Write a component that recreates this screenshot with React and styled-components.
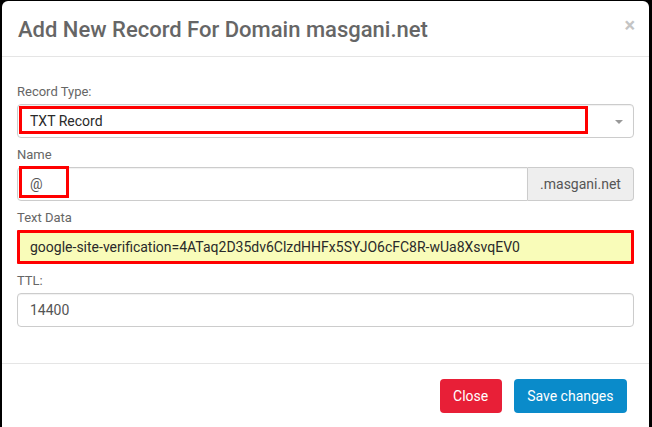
import styled, { createGlobalStyle } from "styled-components";

const GlobalStyle = createGlobalStyle`
  html, body {
    margin: 0;
    padding: 0;
    background: #000;
    font-family: Roboto, "Liberation Sans", sans-serif;
  }
`;

const Screen = styled.div`
  width: 652px;
  height: 427px;
  overflow: hidden;
  padding: 1px 0 0 2px;
  box-sizing: border-box;
`;

const Dialog = styled.div`
  width: 647px;
  height: 440px;
  background: #fff;
  border-radius: 6px;
  display: flex;
  flex-direction: column;
`;

const Header = styled.div`
  height: 55px;
  display: flex;
  align-items: center;
  justify-content: space-between;
  padding: 0 16px 0 16px;
  border-bottom: 1px solid #e5e5e5;
`;

const Title = styled.h4`
  margin: 0;
  font-size: 22px;
  font-weight: 500;
  color: #666;
  padding-top: 2px;
`;

const CloseX = styled.span`
  font-size: 20px;
  font-weight: 700;
  color: #c4c4c4;
  margin-top: -8px;
  margin-right: -2px;
  line-height: 1;
`;

const Body = styled.div`
  padding: 26px 15px 36px;
  display: flex;
  flex-direction: column;
  gap: 8px;
  border-bottom: 1px solid #e5e5e5;
`;

const Group = styled.div`
  display: flex;
  flex-direction: column;
  gap: 3px;
`;

const Label = styled.label`
  font-size: 13px;
  line-height: 18px;
  color: #666;
`;

const Field = styled.div`
  position: relative;
  flex: none;
  height: 34px;
  box-sizing: border-box;
  border: ${(p) => (p.$flagged ? "3px solid #f00" : "1px solid #ccc")};
  border-radius: ${(p) => (p.$flagged ? "1px" : "4px")};
  background: ${(p) => (p.$flagged ? "#f9fcb9" : "#fff")};
  box-shadow: ${(p) => (p.$flagged ? "none" : "inset 0 1px 1px rgba(0,0,0,0.06)")};
  display: flex;
  align-items: center;
  padding: 0 ${(p) => (p.$flagged ? "10px" : "12px")};
  font-size: 14px;
  color: ${(p) => (p.$dark ? "#2a2a2a" : "#555")};
`;

const Caret = styled.span`
  position: absolute;
  right: 10px;
  top: 15px;
  width: 0;
  height: 0;
  border-left: 4px solid transparent;
  border-right: 4px solid transparent;
  border-top: 4px solid #999;
`;

const Mark = styled.span`
  position: absolute;
  top: ${(p) => p.$top}px;
  left: ${(p) => p.$left}px;
  width: ${(p) => p.$w}px;
  height: ${(p) => p.$h}px;
  border: 3px solid #f00;
  box-sizing: border-box;
`;

const InputGroup = styled.div`
  display: flex;
  position: relative;
`;

const LeftField = styled(Field)`
  flex: 1;
  border-radius: 4px 0 0 4px;
`;

const Addon = styled.span`
  width: 106px;
  height: 34px;
  box-sizing: border-box;
  display: flex;
  align-items: center;
  justify-content: center;
  background: #eee;
  border: 1px solid #ccc;
  border-left: none;
  border-radius: 0 4px 4px 0;
  font-size: 14px;
  color: #555;
`;

const Footer = styled.div`
  padding: 15px 22px 15px 15px;
  display: flex;
  justify-content: flex-end;
  gap: 12px;
`;

const Button = styled.button`
  height: 34px;
  padding: 0 13.5px;
  border: none;
  border-radius: 4px;
  font-family: Roboto, "Liberation Sans", sans-serif;
  font-size: 14px;
  color: #fff;
  background: ${(p) => (p.$variant === "danger" ? "#e81f37" : "#0a8bca")};
`;

export default function App() {
  return (
    <>
      <GlobalStyle />
      <Screen>
        <Dialog>
          <Header>
            <Title>Add New Record For Domain masgani.net</Title>
            <CloseX>×</CloseX>
          </Header>
          <Body>
            <Group>
              <Label>Record Type:</Label>
              <Field $dark>
                TXT Record
                <Caret />
                <Mark $top={1} $left={1} $w={569} $h={28} />
              </Field>
            </Group>
            <Group>
              <Label>Name</Label>
              <InputGroup>
                <LeftField>@</LeftField>
                <Addon>.masgani.net</Addon>
                <Mark $top={-1} $left={2} $w={50} $h={32} />
              </InputGroup>
            </Group>
            <Group>
              <Label>Text Data</Label>
              <Field $flagged $dark>
                google-site-verification=4ATaq2D35dv6ClzdHHFx5SYJO6cFC8R-wUa8XsvqEV0
              </Field>
            </Group>
            <Group>
              <Label>TTL:</Label>
              <Field>14400</Field>
            </Group>
          </Body>
          <Footer>
            <Button $variant="danger">Close</Button>
            <Button>Save changes</Button>
          </Footer>
        </Dialog>
      </Screen>
    </>
  );
}
